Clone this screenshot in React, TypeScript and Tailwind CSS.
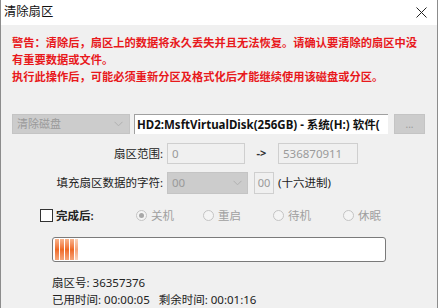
import React from 'react';

const font = { fontFamily: '"Noto Sans", "Noto Sans CJK SC", sans-serif' };

function Chevron({ className }: { className?: string }) {
  return (
    <svg className={className} width="9" height="6" viewBox="0 0 9 6" fill="none">
      <path d="M0.5 0.8L4.5 4.8L8.5 0.8" stroke="#b0b0b0" strokeWidth="1" />
    </svg>
  );
}

function Radio({ label, checked, width }: { label: string; checked?: boolean; width: string }) {
  return (
    <div className={`flex items-center ${width}`}>
      <span className="w-[11px] h-[11px] rounded-full border border-[#c4c4c4] bg-[#f4f4f4] flex items-center justify-center">
        {checked && <span className="w-[5px] h-[5px] rounded-full bg-[#a8a8a8]" />}
      </span>
      <span className="ml-[4px] text-[11.5px] text-[#a0a0a0]">{label}</span>
    </div>
  );
}

export default function App() {
  // Stripes in the progress bar
  const stripes = [0, 1, 2, 3];

  return (
    <div
      className="w-[438px] h-[308px] bg-[#f0f0f0] border-x border-[#8c8c8c] overflow-hidden flex flex-col"
      style={font}
    >
      {/* title bar */}
      <div className="h-[25px] bg-white flex items-center justify-between pl-[3px] pr-[10px] shrink-0">
        <span className="text-[12.3px] text-[#111] leading-none">清除扇区</span>
        <svg width="11" height="11" viewBox="0 0 11 11">
          <path d="M0.5 0.5L10.5 10.5M10.5 0.5L0.5 10.5" stroke="#222" strokeWidth="1" />
        </svg>
      </div>

      <div className="px-[11px] flex flex-col">
        {/* warning */}
        <div className="mt-[9px] text-[11.25px] leading-[17px] font-bold text-[#e8191c]">
          <div className="whitespace-nowrap">警告：清除后，扇区上的数据将永久丢失并且无法恢复。请确认要清除的扇区中没</div>
          <div className="whitespace-nowrap">有重要数据或文件。</div>
          <div className="whitespace-nowrap">执行此操作后，可能必须重新分区及格式化后才能继续使用该磁盘或分区。</div>
        </div>

        {/* disk row */}
        <div className="mt-[29px] flex items-center h-[20px]">
          <div className="w-[118px] h-[20px] bg-[#cccccc] border border-[#c4c4c4] flex items-center justify-between pl-[4px] pr-[6px]">
            <span className="text-[11px] text-[#9a9a9a]">清除磁盘</span>
            <Chevron />
          </div>
          <div className="ml-[4px] w-[254px] h-[20px] bg-white border-t border-l border-[#a0a0a0] flex items-center pl-[2px] overflow-hidden">
            <span className="text-[11.5px] font-bold text-[#111] whitespace-nowrap">HD2:MsftVirtualDisk(256GB) - 系统(H:) 软件(</span>
          </div>
          <div className="ml-[6px] w-[31px] h-[20px] bg-[#cccccc] border border-[#c4c4c4] flex items-center justify-center">
            <span className="text-[10px] text-[#9a9a9a] leading-none">...</span>
          </div>
        </div>

        {/* sector range */}
        <div className="mt-[9px] flex items-center h-[21px]">
          <span className="w-[151px] text-right text-[11.5px] text-[#222]">扇区范围:</span>
          <div className="ml-[4px] w-[78px] h-[21px] border border-[#cfcfcf] bg-[#f0f0f0] flex items-center pl-[4px]">
            <span className="text-[11.5px] text-[#9a9a9a]">0</span>
          </div>
          <span className="w-[33px] text-center text-[11px] font-bold text-[#333]">-&gt;</span>
          <div className="w-[80px] h-[21px] border border-[#cfcfcf] bg-[#f0f0f0] flex items-center pl-[4px]">
            <span className="text-[11.5px] text-[#9a9a9a]">536870911</span>
          </div>
        </div>

        {/* fill char */}
        <div className="mt-[8px] flex items-center h-[22px]">
          <span className="w-[151px] text-right text-[11.5px] text-[#222]">填充扇区数据的字符:</span>
          <div className="ml-[4px] w-[81px] h-[22px] bg-[#cccccc] border border-[#c4c4c4] flex items-center justify-between pl-[4px] pr-[5px]">
            <span className="text-[11.5px] text-[#9a9a9a]">00</span>
            <Chevron />
          </div>
          <div className="ml-[6px] w-[20px] h-[22px] border border-[#cfcfcf] bg-[#f0f0f0] flex items-center justify-center">
            <span className="text-[11px] text-[#9a9a9a]">00</span>
          </div>
          <span className="ml-[4px] text-[11.5px] text-[#222]">(十六进制)</span>
        </div>

        {/* after finish */}
        <div className="mt-[15px] flex items-center h-[13px]">
          <div className="w-[124px] flex items-center pl-[28px]">
            <span className="w-[13px] h-[13px] border border-[#333] bg-white" />
            <span className="ml-[3px] text-[11.5px] font-semibold text-[#222]">完成后:</span>
          </div>
          <Radio label="关机" checked width="w-[67px]" />
          <Radio label="重启" width="w-[70px]" />
          <Radio label="待机" width="w-[70px]" />
          <Radio label="休眠" width="w-[70px]" />
        </div>

        {/* progress */}
        <div className="mt-[15px] ml-[40px] w-[334px] h-[25px] bg-white border border-[#7a7a7a] rounded-[3px] p-[1px] pl-[2px] flex">
          <div className="flex gap-[1px] h-full">
            {stripes.map((s) => (
              <div
                key={s}
                className="w-[4px] h-full bg-gradient-to-b from-[#f8b48c] via-[#ee6a24] to-[#f6a578]"
              />
            ))}
            <div className="w-[3px] h-full bg-gradient-to-b from-[#fbd4bc] via-[#f4a47a] to-[#fbd4bc]" />
          </div>
        </div>

        {/* status */}
        <div className="mt-[12px] ml-[40px] text-[11.5px] leading-[17px] text-[#222]">
          <div>扇区号: 36357376</div>
          <div className="whitespace-pre">已用时间: 00:00:05   剩余时间: 00:01:16</div>
        </div>
      </div>
    </div>
  );
}
